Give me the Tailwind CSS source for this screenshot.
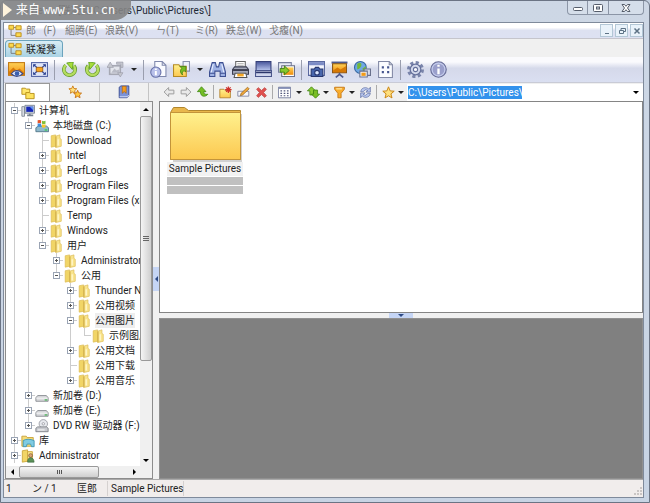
<!DOCTYPE html>
<html lang="zh-CN">
<head>
  <meta charset="UTF-8" />
  <meta name="viewport" content="width=device-width, initial-scale=1.0" />
  <title>Users\Public\Pictures\</title>
  <script src="https://cdn.jsdelivr.net/npm/@tailwindcss/browser@4"></script>
</head>
<body class="h-screen overflow-hidden bg-[#c3cfdf] font-['Roboto','Noto_Sans_CJK_SC',sans-serif] text-[10px] leading-[15px] text-[#222]">

  <!-- icon sprite -->
  <svg class="absolute h-0 w-0">
    <defs>
      <linearGradient id="gold" x1="0" y1="0" x2="0" y2="1"><stop offset="0" stop-color="#fff18e" /><stop offset="1" stop-color="#fcc850" /></linearGradient>
      <linearGradient id="blue" x1="0" y1="0" x2="0" y2="1"><stop offset="0" stop-color="#46549a" /><stop offset="1" stop-color="#b9c6ee" /></linearGradient>
      <linearGradient id="sun" x1="0" y1="0" x2="0" y2="1"><stop offset="0" stop-color="#ffd257" /><stop offset="1" stop-color="#f08c0c" /></linearGradient>
    </defs>
    <symbol id="i-tree" viewBox="0 0 16 16"><path d="M3.500 6v7H9M6 4H9" fill="none" stroke="#777" /><path d="M1 1.500h5.500v4.500H1zM9 2h6v4.500H9zM9 10h6v4.500H9z" fill="#fbd94e" stroke="#b98a1c" /></symbol>
    <symbol id="i-view" viewBox="0 0 16 16"><rect x=".5" y="1.500" width="15" height="12" fill="url(#sun)" stroke="#c27a16" /><path d="M1 10l4-4 3 3 3-2 4 4v2H1z" fill="#d97a08" /><path d="M3 12q5-6 11 0q-6 5-11 0z" fill="#e6ebfa" stroke="#3c4a86" /><circle cx="8.500" cy="11.800" r="2.200" fill="#3a5fb0" /></symbol>
    <symbol id="i-full" viewBox="0 0 16 16"><rect x=".5" y="1.500" width="15" height="13" fill="#dfe5f8" stroke="#5363a4" /><rect x="5" y="6" width="6" height="4" fill="#f5a21c" stroke="#b76f10" /><path d="M2 6V3h3zM14 6V3h-3zM2 10v3h3zM14 10v3h-3z" fill="#2e4392" /><path d="M2.500 3.500l3 2.500M13.500 3.500l-3 2.500M2.500 12.500l3-2.500M13.500 12.500l-3-2.500" stroke="#2e4392" /></symbol>
    <symbol id="i-rot" viewBox="0 0 16 16"><path d="M4 3.500A6 6 0 1 0 12.500 4" fill="none" stroke="#5f9426" stroke-width="4" /><path d="M4 3.500A6 6 0 1 0 12.500 4" fill="none" stroke="#b5dd60" stroke-width="2.600" /><path d="M5 1l7-1-1 8z" fill="#a7dc3b" stroke="#4f9411" stroke-width=".8" /></symbol>
    <symbol id="i-crop" viewBox="0 0 16 16"><rect x="2.500" y="4.500" width="10" height="8" fill="#e3e5ec" stroke="#a6a8b3" stroke-width="1.500" /><path d="M4 11l3-4 2 2 2-1 1 3z" fill="#b9bbc6" /><path d="M0 6l3-5 3 5zM10 11h5l-2.500 4zM9 1h6v5h-2V3H9z" fill="#c6c8d0" stroke="#9799a5" stroke-width=".6" /></symbol>
    <symbol id="i-docinfo" viewBox="0 0 16 16"><path d="M4.500.5h7l3.500 3.500v10.500H4.500z" fill="#fafbff" stroke="#7f88ac" /><path d="M11.500.5V4H15" fill="none" stroke="#7f88ac" /><circle cx="5.500" cy="10.500" r="4.800" fill="#b8c0ea" stroke="#6670a8" /><path d="M5.500 9.500v4M5.500 7v1.500" stroke="#fff" stroke-width="1.800" /></symbol>
    <symbol id="i-foldto" viewBox="0 0 16 16"><path d="M9.500.5h6v9h-6z" fill="#eef1fb" stroke="#8a91ad" /><path d="M.5 3.500h5l1 1.500h6v9.500H.5z" fill="url(#gold)" stroke="#b58a24" /><path d="M6 12c0-4 2-5 4-5V4.500l4 4-4 3.500V10c-2 0-3 0-4 2z" transform="rotate(-45 9 9)" fill="#76bd22" stroke="#3f7f11" stroke-width=".7" /></symbol>
    <symbol id="i-bino" viewBox="0 0 16 16"><path d="M3 1.500h3l1 4h2l1-4h3l2.500 9v4h-5v-5h-5v5h-5v-4z" fill="#9fb2e4" stroke="#3d4f91" /><path d="M4 3l-2 8M12 3l2 8" stroke="#e6edff" /><path d="M1 11.500h4.500M10.500 11.500H15" stroke="#3d4f91" /></symbol>
    <symbol id="i-print" viewBox="0 0 16 16"><path d="M3.500.5h9v6h-9z" fill="#fff" stroke="#666" /><path d="M5 2.500h6M5 4.500h6" stroke="#aaa" /><path d="M.5 8l2-2.500h11l2 2.500v4.500H.5z" fill="#a5a9ba" stroke="#3b3e52" /><path d="M1 8.500h14" stroke="#26283a" stroke-width="1.500" /><path d="M3 11.500h10l1 4H2z" fill="#fff" stroke="#555" /><path d="M5 12h6v2.500H5z" fill="#f5a623" /></symbol>
    <symbol id="i-scan" viewBox="0 0 16 16"><path d="M1 .5h14v8.500H1z" fill="url(#blue)" stroke="#343f78" /><path d="M.5 9h15v5.500H.5z" fill="#cfd5ec" stroke="#4b568b" /><path d="M1 10h14v1.500H1z" fill="#2c366b" /></symbol>
    <symbol id="i-conv" viewBox="0 0 16 16"><path d="M.5 1.500h12v9H.5z" fill="#e8ebf5" stroke="#777f9d" /><path d="M3.500 4.500h12v10h-12z" fill="#fff" stroke="#6a6f88" /><path d="M5 6h9.500v7H5z" fill="url(#sun)" /><path d="M2 7h4V4.500L10.500 9 6 13v-2.500H2z" fill="#86c92c" stroke="#38790f" stroke-width=".8" /></symbol>
    <symbol id="i-cap" viewBox="0 0 16 16"><path d="M.5.500h15v13H.5z" fill="#f2f4fc" stroke="#5a689f" /><path d="M1 1h14v3H1z" fill="#7b8bc5" /><path d="M3 7.500h3l1-1.500h3l1 1.500h3v7H3z" fill="#4866ad" stroke="#27366d" /><circle cx="8.500" cy="11" r="2.200" fill="#dbe7ff" stroke="#27366d" /></symbol>
    <symbol id="i-slide" viewBox="0 0 16 16"><path d="M.5.500h15v2H.5z" fill="#4e5a8d" /><path d="M1.500 2.500h13v8.500h-13z" fill="url(#sun)" stroke="#86500f" /><path d="M2 9l4-3 3 2 5-3v5.500H2z" fill="#d67905" /><path d="M8 11v2M4.500 15.500L8 12.500l3.500 3" stroke="#4e5a8d" fill="none" stroke-width="1.500" /></symbol>
    <symbol id="i-web" viewBox="0 0 16 16"><circle cx="6" cy="6" r="5.500" fill="#6ea7e4" stroke="#35669f" /><path d="M3 2.500q4-2 4 1T3 8zM8 7l3-2 .5 3-3 3z" fill="#72b83b" /><path d="M9.500 7.500h6v6h-6z" fill="#d6dbea" stroke="#68708c" /><path d="M5.500 9.500h7v5.500h-7z" fill="#f2f2f2" stroke="#68708c" /><path d="M7 11h4v3H7z" fill="#f29b18" /></symbol>
    <symbol id="i-sheet" viewBox="0 0 16 16"><path d="M1.500.5h10l3 3v12h-13z" fill="#fbfcff" stroke="#8289a5" /><path d="M11.500.5v3h3" fill="none" stroke="#8289a5" /><path d="M4.500 5h2v2h-2zM9.500 5h2v2h-2zM4.500 9.500h2v2h-2zM9.500 9.500h2v2h-2z" fill="#46568f" /></symbol>
    <symbol id="i-gear" viewBox="0 0 16 16"><circle cx="8" cy="8" r="6.500" fill="none" stroke="#7a85ab" stroke-width="3" stroke-dasharray="2.900 2.200" /><circle cx="8" cy="8" r="5" fill="#d3d9ec" stroke="#66719c" stroke-width="1.200" /><circle cx="8" cy="8" r="2" fill="#f7f8fd" stroke="#66719c" /></symbol>
    <symbol id="i-info" viewBox="0 0 16 16"><circle cx="8" cy="8" r="7.300" fill="#9a9fcb" stroke="#6a6f98" /><circle cx="8" cy="8" r="6" fill="none" stroke="#c4ccec" /><path d="M8 7v5.500M8 3.500v2" stroke="#fff" stroke-width="2.200" /></symbol>
    <symbol id="i-folders" viewBox="0 0 16 16"><path d="M1 2.500h4l1 1h4v6H1z" fill="#ffe66c" stroke="#b38a14" /><path d="M5.500 7.500h4l1 1h4.500v6H5.500z" fill="#fde25d" stroke="#b38a14" /></symbol>
    <symbol id="i-star" viewBox="0 0 16 16"><path d="M8 1l2 5 5 .4-4 3.300 1.300 5L8 12l-4.300 2.700L5 9.700 1 6.400 6 6z" fill="#ffe07c" stroke="#cb8613" stroke-width="1.200" /></symbol>
    <symbol id="i-stars" viewBox="0 0 16 16"><path d="M5.500 1l1.300 3 3.200.3-2.400 2.200.7 3-2.800-1.600L2.700 9.500l.7-3L1 4.300 4.200 4z" fill="#ffe07c" stroke="#cb7a13" /><path d="M11 6l1.300 3 3.200.3-2.400 2.200.7 3-2.800-1.600-2.800 1.600.7-3-2.400-2.200L9.700 9z" fill="#ffc83d" stroke="#c56d10" /></symbol>
    <symbol id="i-book" viewBox="0 0 16 16"><path d="M2.500 2.500l2-1.500h9v11l-2 2.500h-9z" fill="#7c93d8" stroke="#35478e" /><path d="M3 13.500h8.500l2-2" fill="none" stroke="#e6ecff" /><path d="M6 1.500h4.500v8L8.300 7.500 6 9.500z" fill="#f59d1b" stroke="#a85e0c" stroke-width=".7" /></symbol>
    <symbol id="i-back" viewBox="0 0 16 16"><path d="M1.500 8l6-6v3.500h7v5h-7V14z" fill="#e9e9e9" stroke="#9c9c9c" stroke-width="1.300" /></symbol>
    <symbol id="i-up" viewBox="0 0 16 16"><path d="M6 1l6 6.500H9c0 3 1.500 4 5.500 3.500-3 4-10 4-10-3.500H.5z" fill="#75be24" stroke="#3b850f" /></symbol>
    <symbol id="i-newf" viewBox="0 0 16 16"><path d="M1 4h5l1.500 1.500H14v9H1z" fill="url(#gold)" stroke="#ae7a25" /><path d="M11.500.5v8M7.500 4.500h8M8.700 1.700l5.600 5.600M14.300 1.700L8.700 7.300" stroke="#cf302a" stroke-width="1.500" /></symbol>
    <symbol id="i-ren" viewBox="0 0 16 16"><path d="M1 6.500h13.500v6H1z" fill="#f5f6fb" stroke="#777d99" /><path d="M4 12l1-3 8-7.500 2 2L7 11z" fill="#f2a93a" stroke="#8a5a1b" stroke-width=".8" /></symbol>
    <symbol id="i-del" viewBox="0 0 16 16"><path d="M2 4l2-2 4 3.500L12 2l2 2-3.500 4 3.500 4-2 2-4-3.500L4 14l-2-2 3.500-4z" fill="#e0504d" stroke="#c04a47" /></symbol>
    <symbol id="i-grid" viewBox="0 0 16 16"><path d="M.5 1.500h15v13H.5z" fill="#fff" stroke="#646d90" /><path d="M1 2.500h14" stroke="#7c87b0" stroke-width="2" /><path d="M3 6h10M3 9h10M3 12h10" stroke="#51567a" stroke-width="1.500" stroke-dasharray="2 2" /></symbol>
    <symbol id="i-sort" viewBox="0 0 16 16"><path d="M5.500 1l5 5H8v5H3.500V6H.5z" fill="#8bca33" stroke="#3f8510" /><path d="M10.500 15l-5-5H8V5h5v5h2.500z" fill="#79bd23" stroke="#3f8510" /></symbol>
    <symbol id="i-filter" viewBox="0 0 16 16"><path d="M2 1.500h12v2.500l-4 5v5.500H6V9L2 4z" fill="#f9ad2c" stroke="#c0700f" /><path d="M4 3.500h7" stroke="#ffe8a4" stroke-width="1.500" /></symbol>
    <symbol id="i-refresh" viewBox="0 0 16 16"><path d="M2 7q1-5 6-5 3 0 4 2l2-2.500v6H8.500L11 5.500Q8 3 5 7zM14 9q-1 5-6 5-3 0-4-2l-2 2.500v-6h5.500L5 10.500Q8 13 11 9z" fill="#b8c7ef" stroke="#58679d" stroke-width=".8" /></symbol>
    <symbol id="t-pc" viewBox="0 0 16 16"><path d="M1 3h3v11H1z" fill="#d8dce3" stroke="#7f8893" /><path d="M4.500 1.500h11v9h-11z" fill="#cfd6df" stroke="#76818f" /><path d="M6 3h8v6H6z" fill="#1426b8" /><path d="M10 3h4v4z" fill="#5f93f1" /><path d="M7 13h7M10 11v2" stroke="#76818f" stroke-width="2" /></symbol>
    <symbol id="t-win" viewBox="0 0 16 16"><path d="M1 10l3-2h9l2.500 2v4.500H1z" fill="#8fb9cc" stroke="#4f7586" /><path d="M3 1.500q2-1 4 0V5Q5 4 3 5z" fill="#e5552a" /><path d="M8 2q2 1 4 0v3.500q-2 1-4 0z" fill="#7fbf3a" /><path d="M3 5.500q2-1 4 0V9Q5 8 3 9z" fill="#3e8edc" /><path d="M8 6q2 1 4 0v3.500q-2 1-4 0z" fill="#f7c52b" /><path d="M11 12.500h3" stroke="#3bd04a" stroke-width="1.500" /></symbol>
    <symbol id="t-folder" viewBox="0 0 16 16"><path d="M2.500 2l5-1v13l-5 1z" fill="#f1d566" stroke="#dcbc55" stroke-width=".8" /><path d="M7.500 2.500L12.500 1v4l1.500 1v8l-6.500 1.500z" fill="#f9e48c" stroke="#dcbc55" stroke-width=".8" /><path d="M8 3v12" stroke="#c9a33c" /><path d="M10.500 6v7" stroke="#fff7cf" stroke-width="1.500" /></symbol>
    <symbol id="t-disk" viewBox="0 0 16 16"><path d="M1 10l2-2.500h10l2 2.500v4H1z" fill="#d9dadd" stroke="#85888e" /><path d="M1.500 10.500h13" stroke="#f8f8f8" /><path d="M11 12.500h3" stroke="#49b356" stroke-width="1.500" /></symbol>
    <symbol id="t-dvd" viewBox="0 0 16 16"><circle cx="9.500" cy="5.500" r="4.800" fill="#e7e9ee" stroke="#999ca3" /><circle cx="9.500" cy="5.500" r="1.400" fill="#fff" stroke="#999ca3" /><path d="M1 10.500l2-1.500h10l2 1.500v4H1z" fill="#c8cacf" stroke="#7d8087" /><path d="M3 12.500h8" stroke="#fff" /></symbol>
    <symbol id="t-lib" viewBox="0 0 16 16"><path d="M1 2.500h5l1 1.500h7v10H1z" fill="#f4dc78" stroke="#c7a037" /><path d="M2.500 7.500q5-3 12.500 0v7h-3l-1-3H7l-1 3H2.500z" fill="#7fcbe2" stroke="#3f93b3" /></symbol>
    <symbol id="t-user" viewBox="0 0 16 16"><path d="M1.500 2l6-1v13l-6 1z" fill="#f1d566" stroke="#cba63a" /><path d="M7.500 3H13v11H7.500z" fill="#f9e48c" stroke="#cba63a" /><circle cx="11" cy="7.500" r="2.200" fill="#d9a273" stroke="#714e2d" stroke-width=".7" /><path d="M7.500 15q0-5 3.500-5t4 5z" fill="#5b9158" stroke="#37653a" stroke-width=".7" /></symbol>
  </svg>

  <div class="relative flex h-full flex-col rounded-t-md border border-[#6b7484] bg-linear-to-b from-[#cdd7e5] to-[#c8d4e4] pr-[5px] pb-[4px] pl-[2px]">

    <!-- title bar -->
    <header class="flex h-[21px] shrink-0 items-start">
      <h1 class="grow truncate pl-3.5 leading-[20px] text-[#1c2733]">XnView - [联凝凳 C:\Users\Public\Pictures\]</h1>
      <div class="flex h-[14px] divide-x divide-[#8b95a6] rounded-b border border-t-0 border-[#8b95a6] bg-[#d5deea]">
        <button aria-label="Minimize" class="flex w-5 items-center justify-center"><svg class="h-2.5 w-2.5" viewBox="0 0 10 10"><rect x=".5" y="4.500" width="9" height="3" rx="1" fill="#fff" stroke="#555d6b" /></svg></button>
        <button aria-label="Maximize" class="flex w-[21px] items-center justify-center"><svg class="h-2.5 w-2.5" viewBox="0 0 10 10"><rect x=".5" y="1.500" width="9" height="7" rx="1" fill="#fff" stroke="#555d6b" /><rect x="3.500" y="4" width="3" height="2" fill="#d5deea" stroke="#555d6b" /></svg></button>
        <button aria-label="Close" class="flex w-[34px] items-center justify-center"><svg class="h-2.5 w-2.5" viewBox="0 0 10 10"><path d="M1 1.500h2.500L5 3.300l1.500-1.800H9L6.500 5 9 8.500H6.500L5 6.700 3.500 8.500H1L3.500 5z" fill="#fff" stroke="#555d6b" /></svg></button>
      </div>
    </header>

    <div class="flex min-h-0 grow flex-col border border-[#7f8a9b] bg-[#f0f0f0]">

      <!-- menu bar -->
      <nav class="flex h-[16px] shrink-0 items-center border-b border-[#c5c5cc] bg-linear-to-b from-white from-30% via-[#dde1f1] via-50% to-[#dde1f2] text-[#777]">
        <svg class="mx-1 h-3.5 w-3.5"><use href="#i-tree" /></svg>
        <button class="w-[39px] text-left whitespace-pre">郎   (F)</button>
        <button class="w-[40px] text-left">絪腾(E)</button>
        <button class="w-[51px] text-left">浪跌(V)</button>
        <button class="w-[39px] text-left">ㄣ(T)</button>
        <button class="w-[31px] text-left">ミ(R)</button>
        <button class="w-[43px] text-left">跌怠(W)</button>
        <button class="grow text-left">戈癁(N)</button>
        <div class="flex gap-0.5">
          <button aria-label="Minimize tab" class="flex h-[13px] w-[13px] items-center justify-center border border-[#b3c7d6] bg-[#e9f2fa]"><svg class="h-2 w-2" viewBox="0 0 8 8"><path d="M2 6.500h4" stroke="#5d7285" /></svg></button>
          <button aria-label="Restore tab" class="flex h-[13px] w-[13px] items-center justify-center border border-[#b3c7d6] bg-[#e9f2fa]"><svg class="h-2 w-2" viewBox="0 0 8 8"><path d="M3 3V1.500h4.500v3H6M1.500 3.500h4v3h-4z" fill="none" stroke="#5d7285" /></svg></button>
          <button aria-label="Close tab" class="flex h-[13px] w-[13px] items-center justify-center border border-[#b3c7d6] bg-[#e9f2fa]"><svg class="h-2 w-2" viewBox="0 0 8 8"><path d="M1.500 1.500l5 5M6.500 1.500l-5 5" stroke="#5d7285" stroke-width="1.500" /></svg></button>
        </div>
      </nav>

      <!-- document tab -->
      <div class="flex h-[18px] shrink-0 items-end">
        <button class="ml-px flex h-[17px] w-[58px] items-center gap-1 rounded-t border border-b-0 border-[#6ba3bd] bg-linear-to-b from-[#d9edf5] to-[#a9d2e4] pl-0.5"><svg class="h-3.5 w-3.5"><use href="#i-tree" /></svg>联凝凳</button>
      </div>

      <!-- main toolbar -->
      <div id="mainbar" class="flex h-[26px] shrink-0 items-center border-b border-[#c9cbd6] bg-linear-to-b from-[#fafafd] from-20% via-[#d5d9ea] via-45% to-[#dadff1] pl-px"></div>

      <div class="flex min-h-0 grow">
        <!-- sidebar -->
        <aside class="ml-px flex w-[148px] shrink-0 flex-col">
          <div class="flex h-[18px] shrink-0 divide-x divide-[#c4c4c4]">
            <button aria-label="Folders" class="flex w-[45px] items-center justify-center border-t border-l border-[#999] bg-white"><svg class="h-3.5 w-3.5"><use href="#i-folders" /></svg></button>
            <button aria-label="Favorites" class="flex w-[50px] items-center justify-center"><svg class="h-3.5 w-3.5"><use href="#i-stars" /></svg></button>
            <button aria-label="Categories" class="flex w-[49px] items-center justify-center"><svg class="h-3.5 w-3.5"><use href="#i-book" /></svg></button>
            <span class="grow"></span>
          </div>
          <div class="flex min-h-0 grow flex-col border border-[#8c8c8c] bg-white">
            <div class="flex min-h-0 grow">
              <ul id="tree" class="min-w-0 grow overflow-hidden pt-px pl-px"></ul>
              <div class="flex w-3 shrink-0 flex-col items-center bg-[#f0f0f0]">
                <button aria-label="Scroll up" class="flex h-3.5 items-center"><span class="border-x-3 border-b-3 border-x-transparent border-b-black"></span></button>
                <div class="flex h-[245px] w-full flex-col items-center justify-center gap-px rounded-xs border border-[#999] bg-linear-to-r from-[#f5f5f5] to-[#cfcfcf]"><i class="h-px w-1.5 bg-[#666]"></i><i class="h-px w-1.5 bg-[#666]"></i><i class="h-px w-1.5 bg-[#666]"></i></div>
                <button aria-label="Scroll down" class="mt-auto flex h-3 items-center"><span class="border-x-3 border-t-3 border-x-transparent border-t-black"></span></button>
              </div>
            </div>
            <div class="flex h-3 shrink-0 items-center bg-[#f0f0f0]">
              <button aria-label="Scroll left" class="flex w-[13px] justify-center"><span class="border-y-3 border-r-3 border-y-transparent border-r-black"></span></button>
              <div class="flex h-full w-20 items-center justify-center gap-px rounded-xs border border-[#999] bg-linear-to-b from-[#f5f5f5] to-[#cfcfcf]"><i class="h-1 w-px bg-[#555]"></i><i class="h-1 w-px bg-[#555]"></i><i class="h-1 w-px bg-[#555]"></i></div>
              <button aria-label="Scroll right" class="mr-4 ml-auto"><span class="block border-y-3 border-l-3 border-y-transparent border-l-black"></span></button>
            </div>
          </div>
        </aside>

        <div class="flex w-1.5 shrink-0 items-center">
          <button aria-label="Toggle sidebar" class="mb-1 flex h-6 w-full items-center justify-center bg-[#c5d5f5]"><span class="border-y-3 border-r-3 border-y-transparent border-r-[#2d4a86]"></span></button>
        </div>

        <main class="flex min-w-0 grow flex-col">
          <div class="flex h-[18px] shrink-0 items-center">
            <div id="navbar" class="flex h-full shrink-0 items-center pl-px"></div>
            <div class="ml-0.5 flex h-[17px] min-w-0 grow items-center bg-white">
              <div class="grow pl-px"><input aria-label="Path" value="C:\Users\Public\Pictures\" class="block h-[13px] w-[114px] bg-[#3392ec] text-[10px] leading-[13px] text-white outline-none" /></div>
              <button aria-label="Path history" class="flex w-3.5 justify-center"><span class="border-x-3 border-t-3 border-x-transparent border-t-black"></span></button>
            </div>
          </div>
          <section class="grow border border-[#858585] bg-white">
            <figure class="ml-[7px] flex w-[76px] flex-col items-center pt-1">
              <svg class="h-[56px] w-[76px]" viewBox="0 0 76 56">
                <path d="M6 8h69v48H6z" fill="#999" opacity=".45" />
                <path d="M3.500 53.500v-47l3-5h11l4 3h52v49z" fill="#e9b74c" stroke="#b1862e" />
                <path d="M3.500 6.500h70v47h-70z" fill="url(#gold)" stroke="#c3943a" />
              </svg>
              <figcaption class="w-full bg-[#f2f2f2] text-center leading-[14px] whitespace-nowrap">Sample Pictures</figcaption>
              <div class="mt-px h-2 w-full bg-[#c0c0c0]"></div>
              <div class="mt-px h-2 w-full bg-[#c0c0c0]"></div>
            </figure>
          </section>
          <div class="flex h-[5px] shrink-0 justify-center">
            <button aria-label="Toggle preview" class="flex w-6 items-center justify-center bg-[#c5d5f5]"><span class="border-x-3 border-t-3 border-x-transparent border-t-[#2d4a86]"></span></button>
          </div>
          <section aria-label="Preview" class="h-[161px] shrink-0 border border-[#909090] bg-[#808080]"></section>
        </main>
      </div>

      <!-- status bar -->
      <footer class="flex h-[18px] shrink-0 items-center border-t border-[#aaa] bg-[#f1edec]">
        <span class="w-[28px] pl-0.5">1</span>
        <span class="w-[45px]">ン / 1</span>
        <span class="w-[30px]">匡郎</span>
        <span class="w-[77px] border-x border-[#d5d1d0] pl-[3px] whitespace-nowrap">Sample Pictures</span>
        <svg class="mt-1 ml-auto h-2.5 w-2.5" viewBox="0 0 10 10"><path d="M7 1h2v2H7zM7 4h2v2H7zM4 4h2v2H4zM7 7h2v2H7zM4 7h2v2H4zM1 7h2v2H1z" fill="#c9c5c4" /></svg>
      </footer>
    </div>

    <!-- site banner over the title -->
    <div class="absolute -top-px -left-px flex h-5 w-[131px] items-center rounded-br-2xl bg-[#858585]/90 text-xs text-white">
      <svg class="mr-0.5 ml-0.5 h-4 w-3" viewBox="0 0 12 16"><path d="M1 1v14l9-7z" fill="#fff3dc" /></svg>
      <span class="whitespace-nowrap">来自 <span class="font-['DejaVu_Sans_Mono',monospace]">www.5tu.cn</span></span>
    </div>
  </div>

  <script>
    const sep = '<span class="mx-[3px] h-4/5 w-px shrink-0 bg-[#9a9eae]"></span>';
    const smallSep = '<span class="mx-0.5 h-4/5 w-px shrink-0 bg-[#aaa]"></span>';

    function toolButton(icon, btnClass, svgClass) {
      return `<button aria-label="${icon}" class="${btnClass}"><svg class="${svgClass}"><use href="#i-${icon}" /></svg></button>`;
    }

    function arrow(cls) {
      return `<button aria-label="More" class="${cls}"><span class="border-x-3 border-t-3 border-x-transparent border-t-[#222]"></span></button>`;
    }

    const main = ['view', 'full', '|', 'rot', 'rot2', 'crop', 'v', '|', 'docinfo', 'foldto', 'v', 'bino', 'print', 'scan', 'conv', '|', 'cap', 'slide', 'web', 'sheet', '|', 'gear', 'info'];
    document.getElementById('mainbar').innerHTML = main.map(n => {
      if (n === '|') return sep;
      if (n === 'v') return arrow('flex w-[13px] shrink-0 justify-center');
      // rotate right is the mirrored arrow
      if (n === 'rot2') return toolButton('rot', 'flex w-[23px] shrink-0 justify-center', 'h-[15px] w-[15px] -scale-x-100');
      return toolButton(n, 'flex w-[23px] shrink-0 justify-center', n === 'rot' ? 'h-[15px] w-[15px]' : 'h-[17px] w-[17px]');
    }).join('');

    const nav = ['back', 'fwd', 'up', '|', 'newf', 'ren', 'del', '|', 'grid', 'V', 'sort', 'v', 'filter', 'v', 'refresh', '|', 'star', 'v'];
    document.getElementById('navbar').innerHTML = nav.map(n => {
      if (n === '|') return smallSep;
      if (n === 'V') return arrow('flex w-[11px] justify-center');
      if (n === 'v') return arrow('flex w-2 justify-center');
      if (n === 'fwd') return toolButton('back', 'flex w-[17px] justify-center', 'h-3 w-3 -scale-x-100');
      if (n === 'back' || n === 'up') return toolButton(n, 'flex w-[17px] justify-center', 'h-3 w-3');
      return toolButton(n, 'flex w-[18px] justify-center', 'h-[13px] w-[13px]');
    }).join('');

    // [ancestor guides, expander, icon, label, last in its branch]
    const rows = [
      ['', '-', 'pc', '计算机'],
      ['|', '-', 'win', '本地磁盘 (C:)'],
      ['||', '', 'folder', 'Download'],
      ['||', '+', 'folder', 'Intel'],
      ['||', '+', 'folder', 'PerfLogs'],
      ['||', '+', 'folder', 'Program Files'],
      ['||', '+', 'folder', 'Program Files (x86)'],
      ['||', '', 'folder', 'Temp'],
      ['||', '+', 'folder', 'Windows'],
      ['||', '-', 'folder', '用户', true],
      ['|| ', '+', 'folder', 'Administrator'],
      ['|| ', '-', 'folder', '公用', true],
      ['||  ', '+', 'folder', 'Thunder Network'],
      ['||  ', '+', 'folder', '公用视频'],
      ['||  ', '-', 'folder', '公用图片'],
      ['||  |', '', 'folder', '示例图片', true],
      ['||  ', '+', 'folder', '公用文档'],
      ['||  ', '', 'folder', '公用下载'],
      ['||  ', '+', 'folder', '公用音乐', true],
      ['|', '+', 'disk', '新加卷 (D:)'],
      ['|', '+', 'disk', '新加卷 (E:)'],
      ['|', '+', 'dvd', 'DVD RW 驱动器 (F:)', true],
      ['', '+', 'lib', '库'],
      ['', '+', 'user', 'Administrator']
    ];

    const full = '<path d="M7.500 0v15" stroke="#ccc" />';
    const half = '<path d="M7.500 0v7" stroke="#ccc" />';
    const box = '<rect x="4.500" y="4.500" width="6" height="6" fill="#fff" stroke="#9aa4b4" /><path d="M6 7.500h3" stroke="#555" />';

    document.getElementById('tree').innerHTML = rows.map(([guides, exp, icon, label, last]) => {
      const lines = [...guides].map(g => `<svg class="h-[15px] w-3.5 shrink-0" viewBox="0 0 14 15">${g === '|' ? full : ''}</svg>`).join('');
      const node = `<svg class="h-[15px] w-3.5 shrink-0" viewBox="0 0 14 15">${last ? half : full}<path d="M7 7.500h7" stroke="#ccc" />${exp ? box : ''}${exp === '+' ? '<path d="M7.500 6v3" stroke="#555" />' : ''}</svg>`;
      const text = label === '公用图片' ? 'shrink-0 bg-[#eee] whitespace-nowrap' : 'shrink-0 whitespace-nowrap';
      return `<li class="flex h-[15px] items-center">${lines}${node}<svg class="mr-1 h-3.5 w-3.5 shrink-0"><use href="#t-${icon}" /></svg><span class="${text}">${label}</span></li>`;
    }).join('');
  </script>
</body>
</html>
